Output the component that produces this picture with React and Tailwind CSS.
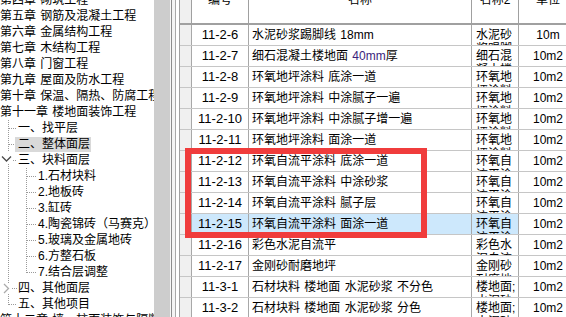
import React from 'react';

const FONT = { fontFamily: '"Liberation Sans", "Noto Sans CJK SC", sans-serif' };

const chapters = [
    '第四章 砌筑工程',
    '第五章 钢筋及混凝土工程',
    '第六章 金属结构工程',
    '第七章 木结构工程',
    '第八章 门窗工程',
    '第九章 屋面及防水工程',
    '第十章 保温、隔热、防腐工程',
    '第十一章 楼地面装饰工程',
];

const subItems = ['1.石材块料', '2.地板砖', '3.缸砖', '4.陶瓷锦砖（马赛克）', '5.玻璃及金属地砖', '6.方整石板', '7.结合层调整'];

const rows = [
    { code: '11-2-6', name: '水泥砂浆踢脚线 18mm', name2: '水泥砂浆踢脚线', unit: '10m' },
    { code: '11-2-7', name: 'special', name2: '细石混凝土楼地面', unit: '10m2' },
    { code: '11-2-8', name: '环氧地坪涂料 底涂一道', name2: '环氧地坪涂料', unit: '10m2' },
    { code: '11-2-9', name: '环氧地坪涂料 中涂腻子一遍', name2: '环氧地坪涂料', unit: '10m2' },
    { code: '11-2-10', name: '环氧地坪涂料 中涂腻子增一遍', name2: '环氧地坪涂料', unit: '10m2' },
    { code: '11-2-11', name: '环氧地坪涂料 面涂一道', name2: '环氧地坪涂料', unit: '10m2' },
    { code: '11-2-12', name: '环氧自流平涂料 底涂一道', name2: '环氧自流平涂料', unit: '10m2' },
    { code: '11-2-13', name: '环氧自流平涂料 中涂砂浆', name2: '环氧自流平涂料', unit: '10m2' },
    { code: '11-2-14', name: '环氧自流平涂料 腻子层', name2: '环氧自流平涂料', unit: '10m2' },
    { code: '11-2-15', name: '环氧自流平涂料 面涂一道', name2: '环氧自流平涂料', unit: '10m2', selected: true },
    { code: '11-2-16', name: '彩色水泥自流平', name2: '彩色水泥自流平', unit: '10m2' },
    { code: '11-2-17', name: '金刚砂耐磨地坪', name2: '金刚砂耐磨地坪', unit: '10m2' },
    { code: '11-3-1', name: '石材块料 楼地面 水泥砂浆 不分色', name2: '楼地面;水泥砂浆', unit: '10m2' },
    { code: '11-3-2', name: '石材块料 楼地面 水泥砂浆 分色', name2: '楼地面;水泥砂浆', unit: '10m2' },
];

// dotted connector
const Dot = ({ x1, y1, x2, y2 }) => (
    <line x1={x1} y1={y1} x2={x2} y2={y2} stroke="#9a9a9a" strokeWidth="1" strokeDasharray="1 1" />
);

const Gutter = ({ w, children }) => (
    <svg width={w} height="16" className="shrink-0" viewBox={`0 0 ${w} 16`}>
        {children}
    </svg>
);

const TreeRow = ({ gutter, children }) => (
    <div className="flex h-[16px] items-center whitespace-nowrap leading-[16px]">
        {gutter}
        {children}
    </div>
);

const Tree = () => (
    <div className="w-[154px] shrink-0 overflow-hidden bg-white text-[12px] text-black" style={FONT}>
        <div className="mt-[-8px] flex flex-col">
            {chapters.map((c) => (
                <TreeRow key={c}><span className="[word-spacing:1px]">{c}</span></TreeRow>
            ))}

            <TreeRow gutter={<Gutter w={18}><Dot x1={8.5} y1={0} x2={8.5} y2={16} /><Dot x1={9} y1={8.5} x2={17} y2={8.5} /></Gutter>}>
                <span>一、找平层</span>
            </TreeRow>
            <TreeRow gutter={<Gutter w={15}><Dot x1={8.5} y1={0} x2={8.5} y2={16} /><Dot x1={9} y1={8.5} x2={15} y2={8.5} /></Gutter>}>
                <span className="mt-[1px] h-[15px] bg-[#d9d9d9] pl-[3px] pr-[1px] leading-[15px]">二、整体面层</span>
            </TreeRow>
            <TreeRow gutter={
                <Gutter w={18}>
                    <Dot x1={8.5} y1={12} x2={8.5} y2={16} />
                    <Dot x1={13} y1={8.5} x2={17} y2={8.5} />
                    <polyline points="2,4.5 6.5,9 11,4.5" fill="none" stroke="#4a4a4a" strokeWidth="1.3" />
                </Gutter>
            }>
                <span>三、块料面层</span>
            </TreeRow>
            {subItems.map((s, i) => (
                <TreeRow key={s} gutter={
                    <Gutter w={38}>
                        <Dot x1={8.5} y1={0} x2={8.5} y2={16} />
                        <Dot x1={26.5} y1={0} x2={26.5} y2={i === subItems.length - 1 ? 9 : 16} />
                        <Dot x1={27} y1={8.5} x2={36} y2={8.5} />
                    </Gutter>
                }>
                    <span>{s}</span>
                </TreeRow>
            ))}
            <TreeRow gutter={
                <Gutter w={18}>
                    <Dot x1={8.5} y1={0} x2={8.5} y2={3} />
                    <Dot x1={8.5} y1={14} x2={8.5} y2={16} />
                    <Dot x1={12} y1={8.5} x2={17} y2={8.5} />
                    <polyline points="4,4 8.5,8.5 4,13" fill="none" stroke="#aaaaaa" strokeWidth="1.3" />
                </Gutter>
            }>
                <span>四、其他面层</span>
            </TreeRow>
            <TreeRow gutter={<Gutter w={18}><Dot x1={8.5} y1={0} x2={8.5} y2={9} /><Dot x1={9} y1={8.5} x2={17} y2={8.5} /></Gutter>}>
                <span>五、其他项目</span>
            </TreeRow>
            <TreeRow><span className="[word-spacing:1px]">第十二章 墙、柱面装饰与隔断、幕墙工程</span></TreeRow>
        </div>
    </div>
);

const Splitter = () => (
    <div className="flex shrink-0">
        <div className="w-[16px] bg-[#cdcdcd]" />
        <div className="w-[1px] bg-[#f7f7f7]" />
        <div className="w-[1px] bg-[#8c8c8c]" />
        <div className="w-[3px] bg-[#f4f4f4]" />
        <div className="w-[1px] bg-[#a8a8a8]" />
        <div className="w-[3px] bg-white" />
        <div className="w-[1px] bg-[#a0a0a0]" />
    </div>
);

const Grid = () => (
    <div className="flex w-[400px] shrink-0 flex-col bg-white text-[12px] text-black" style={FONT}>
        {/* header */}
        <div className="flex h-[25px] shrink-0 overflow-hidden border-b-2 border-[#a0a0a0]">
            <div className="w-[12px] shrink-0 border-r border-[#a0a0a0] bg-[#f0f0f0]" />
            <div className="w-[57px] shrink-0 border-r border-[#a0a0a0] text-center"><div className="mt-[-8px] leading-[16px]">编号</div></div>
            <div className="w-[223px] shrink-0 border-r border-[#a0a0a0] text-center"><div className="mt-[-8px] leading-[16px]">名称</div></div>
            <div className="w-[47px] shrink-0 border-r border-[#a0a0a0] text-center"><div className="mt-[-8px] leading-[16px]">名称2</div></div>
            <div className="w-[58px] shrink-0 text-center"><div className="mt-[-8px] leading-[16px]">单位</div></div>
        </div>

        {rows.map((r) => {
            const sel = r.selected ? 'bg-[#cde8fc]' : 'bg-white';
            return (
                <div key={r.code} className="flex h-[21px] shrink-0 border-b border-[#c6c6c6]">
                    <div className="w-[12px] shrink-0 border-r border-[#a8a8a8] bg-[#f0f0f0]" />
                    <div className={`flex w-[57px] shrink-0 items-center justify-center border-r border-[#a8a8a8] text-[13px] ${sel}`}>
                        {r.code}
                    </div>
                    <div className={`flex w-[223px] shrink-0 items-center overflow-hidden whitespace-nowrap border-r border-[#a8a8a8] pl-[3px] [word-spacing:1px] ${sel}`}>
                        {r.name === 'special' ? (
                            <span>细石混凝土楼地面 <span className="text-[#3b1f7c]">40mm</span>厚</span>
                        ) : (
                            r.name
                        )}
                    </div>
                    <div className={`w-[47px] shrink-0 overflow-hidden break-all border-r border-[#a8a8a8] pl-[4px] pt-[3px] leading-[14px] ${sel}`}>
                        {r.name2}
                    </div>
                    <div className="flex w-[58px] shrink-0 items-center justify-center bg-white">
                        {r.unit}
                    </div>
                </div>
            );
        })}
    </div>
);

export default function App() {
    return (
        <div className="relative flex h-[317px] w-[566px] overflow-hidden bg-white">
            <Tree />
            <Splitter />
            <Grid />
            {/* red highlight frame */}
            <div className="pointer-events-none absolute left-[185px] top-[148px] h-[90px] w-[242px] border-[6px] border-[#f03c3c]" />
        </div>
    );
}
